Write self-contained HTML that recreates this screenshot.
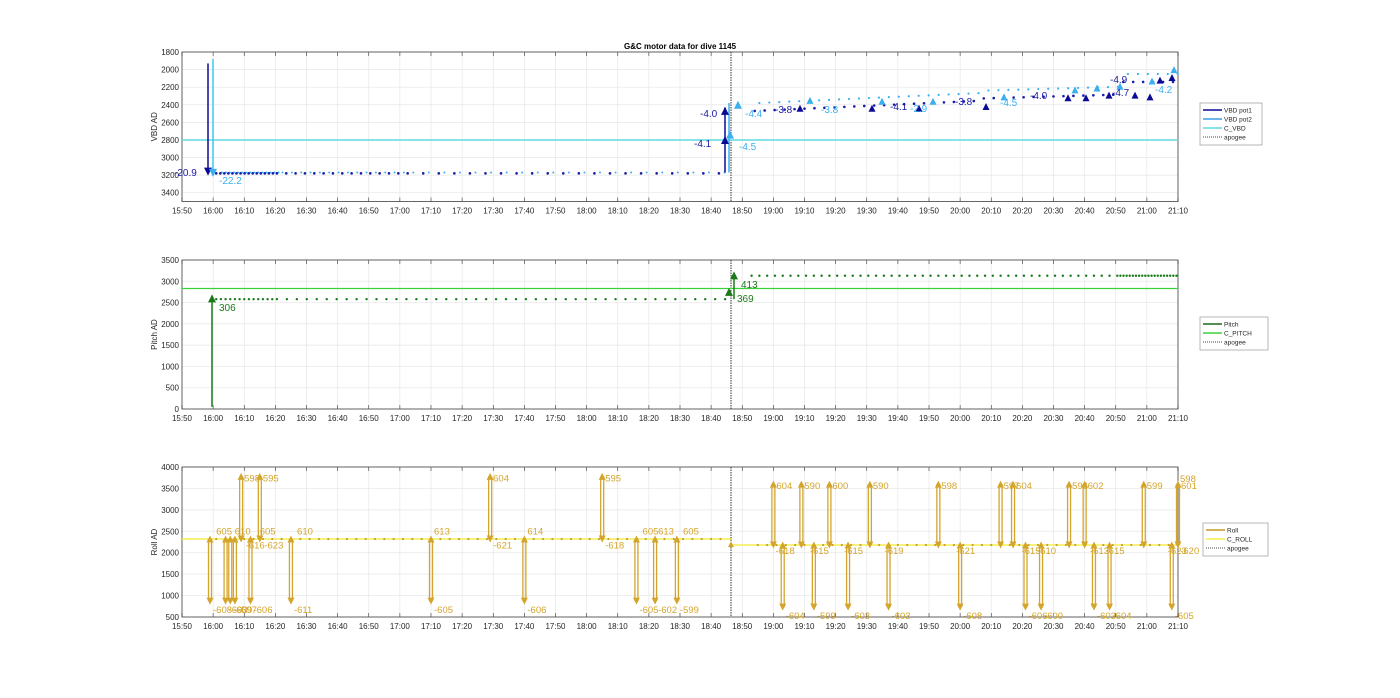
<!DOCTYPE html><html><head><style>body{margin:0;background:#fff}svg text{font-family:"Liberation Sans",sans-serif}</style></head><body>
<svg id="s" width="1400" height="693" xmlns="http://www.w3.org/2000/svg">
<text x="680" y="49" font-size="8" font-weight="bold" text-anchor="middle" fill="#000">G&amp;C motor data for dive 1145</text>
</svg>
<script>
const s=document.getElementById('s');let h='';
const X0=182,X1=1178,dx=(X1-X0)/32;
const tx=m=>X0+m*dx/10;
const T=['15:50','16:00','16:10','16:20','16:30','16:40','16:50','17:00','17:10','17:20','17:30','17:40','17:50','18:00','18:10','18:20','18:30','18:40','18:50','19:00','19:10','19:20','19:30','19:40','19:50','20:00','20:10','20:20','20:30','20:40','20:50','21:00','21:10'];
function axes(top,bot,vals,ymap,ylabel){
 for(let i=0;i<=32;i++){let x=X0+i*dx;h+=`<line x1="${x}" y1="${top}" x2="${x}" y2="${bot}" stroke="#e6e6e6" stroke-width="0.7"/>`;
 h+=`<line x1="${x}" y1="${bot}" x2="${x}" y2="${bot-4}" stroke="#333" stroke-width="0.6"/><line x1="${x}" y1="${top}" x2="${x}" y2="${top+4}" stroke="#333" stroke-width="0.6"/>`;
 h+=`<text x="${x}" y="${bot+12}" font-size="8" fill="#262626" text-anchor="middle">${T[i]}</text>`;}
 vals.forEach(v=>{let y=ymap(v);h+=`<line x1="${X0}" y1="${y}" x2="${X1}" y2="${y}" stroke="#e6e6e6" stroke-width="0.7"/><text x="${X0-3}" y="${y+3}" font-size="8" fill="#262626" text-anchor="end">${v}</text>`;});
 h+=`<rect x="${X0}" y="${top}" width="${X1-X0}" height="${bot-top}" fill="none" stroke="#262626" stroke-width="0.7"/>`;
 h+=`<text transform="translate(157,${(top+bot)/2}) rotate(-90)" font-size="8" fill="#262626" text-anchor="middle">${ylabel}</text>`;
 h+=`<line x1="731" y1="${top}" x2="731" y2="${bot}" stroke="#333" stroke-width="1" stroke-dasharray="1.5,1"/>`;
}
function dot(x,y,c,r=1.3){h+=`<circle cx="${x}" cy="${y}" r="${r}" fill="${c}"/>`;}
function tri(x,y,c,up,sz=4){h+=up?`<polygon points="${x-sz},${y+sz} ${x+sz},${y+sz} ${x},${y-sz}" fill="${c}"/>`:`<polygon points="${x-sz},${y-sz} ${x+sz},${y-sz} ${x},${y+sz}" fill="${c}"/>`;}
function txt(x,y,t,c,fs=10){h+=`<text x="${x}" y="${y}" font-size="${fs}" fill="${c}">${t}</text>`;}
function legend(x,y,w,items){h+=`<rect x="${x}" y="${y}" width="${w}" height="${items.length*9+6}" fill="#fff" stroke="#999" stroke-width="0.7"/>`;
 items.forEach((it,i)=>{let yy=y+7+i*9;h+=`<line x1="${x+3}" y1="${yy}" x2="${x+22}" y2="${yy}" stroke="${it[1]}" stroke-width="${it[2]?1:1.5}" ${it[2]?'stroke-dasharray="1,1"':''}/><text x="${x+24}" y="${yy+2.5}" font-size="6.5" fill="#262626">${it[0]}</text>`;});}
// Plot 1
const y1=v=>52+(v-1800)*149.5/1700;
axes(52,201.5,[1800,2000,2200,2400,2600,2800,3000,3200,3400],y1,'VBD AD');
h+=`<line x1="${X0}" y1="${y1(2800)}" x2="${X1}" y2="${y1(2800)}" stroke="#5fdce0" stroke-width="1.5"/>`;
for(let m=11;m<175;m+= (m<30?1.3:(m<70?3:5))){dot(tx(m),y1(3180),'#1a1aa8');dot(tx(m+1.8),y1(3170),'#3ab0f0',1);}
h+=`<line x1="208" y1="${y1(1930)}" x2="208" y2="${y1(3170)}" stroke="#0a0a96" stroke-width="1.5"/><line x1="213" y1="${y1(1880)}" x2="213" y2="${y1(3170)}" stroke="#3cc8f0" stroke-width="1.5"/>`;
tri(208,y1(3160),'#0a0a96',false);tri(213,y1(3175),'#3ab0f0',false);
txt(174,176,'-20.9','#1a1aa8');txt(219,184,'-22.2','#3ab0f0');
h+=`<line x1="725" y1="${y1(3170)}" x2="725" y2="${y1(2430)}" stroke="#0a0a96" stroke-width="1.5"/><line x1="729" y1="${y1(3170)}" x2="729" y2="${y1(2380)}" stroke="#3ab0f0" stroke-width="1.5"/>`;
tri(725,y1(2800),'#0a0a96',true);tri(725,y1(2470),'#0a0a96',true);tri(730,y1(2740),'#3ab0f0',true);tri(738,y1(2400),'#3ab0f0',true);
txt(700,117,'-4.0','#1a1aa8');txt(694,147,'-4.1','#1a1aa8');txt(739,150,'-4.5','#3ab0f0');txt(745,117,'-4.4','#3ab0f0');
for(let m=184;m<320;m+=3.2){let v=2470-(m-184)*1.6;if(m>255)v=2330-(m-255)*1.0;if(m>300)v=2140;dot(tx(m),y1(v),'#1a1aa8');dot(tx(m+1.5),y1(v-90),'#3ab0f0',1.1);}
[[800,2440,1],[810,2350,0],[872,2440,1],[882,2360,0],[919,2440,1],[933,2360,0],[986,2420,1],[1004,2310,0],[1068,2320,1],[1075,2230,0],[1086,2320,1],[1097,2210,0],[1109,2290,1],[1120,2190,0],[1135,2290,1],[1152,2130,0],[1160,2120,1],[1172,2090,1],[1174,2000,0],[1150,2310,1]].forEach(a=>tri(a[0],y1(a[1]),a[2]?'#0a0a96':'#3ab0f0',true,3.5));
[[775,113,'-3.8',1],[821,113,'-3.8',0],[890,110,'-4.1',1],[910,112,'-2.9',0],[955,105,'-3.8',1],[1000,106,'-4.5',0],[1030,99,'-4.0',1],[1110,83,'-4.9',1],[1112,96,'-4.7',1],[1155,93,'-4.2',0]].forEach(a=>txt(a[0],a[1],a[2],a[3]?'#1a1aa8':'#3ab0f0'));
legend(1200,103,62,[['VBD pot1','#0a0a96'],['VBD pot2','#3a9de8'],['C_VBD','#5fdce0'],['apogee','#444',1]]);
// Plot 2
const y2=v=>260+(3500-v)*149/3500;
axes(260,409,[0,500,1000,1500,2000,2500,3000,3500],y2,'Pitch AD');
h+=`<line x1="${X0}" y1="${y2(2830)}" x2="${X1}" y2="${y2(2830)}" stroke="#3ad23a" stroke-width="1.3"/>`;
for(let m=11;m<175;m+=(m<30?1.5:3.2))dot(tx(m),y2(2580),'#1a7a1a',1.2);
for(let m=183;m<320;m+=(m>300?1:2.5))dot(tx(m),y2(3130),'#1a7a1a',1.2);
h+=`<line x1="212" y1="${y2(50)}" x2="212" y2="${y2(2580)}" stroke="#1a7a1a" stroke-width="1.5"/>`;tri(212,y2(2600),'#1a7a1a',true);
h+=`<line x1="734" y1="${y2(2580)}" x2="734" y2="${y2(3100)}" stroke="#1a7a1a" stroke-width="1.5"/>`;tri(729,y2(2750),'#1a7a1a',true);tri(734,y2(3140),'#1a7a1a',true);
txt(219,311,'306','#1a7a1a');txt(741,288,'413','#1a7a1a');txt(737,302,'369','#1a7a1a');
legend(1200,317,68,[['Pitch','#1a6a1a'],['C_PITCH','#3ad23a'],['apogee','#444',1]]);
// Plot 3
const y3=v=>467+(4000-v)*150/3500;
axes(467,617,[500,1000,1500,2000,2500,3000,3500,4000],y3,'Roll AD');
h+=`<line x1="${X0}" y1="${y3(2320)}" x2="731" y2="${y3(2320)}" stroke="#f4ee50" stroke-width="1.5"/><line x1="731" y1="${y3(2180)}" x2="${X1}" y2="${y3(2180)}" stroke="#f4ee50" stroke-width="1.5"/>`;
for(let m=11;m<175;m+=3)dot(tx(m),y3(2320),'#c8a030',1.1);
for(let m=185;m<320;m+=3)dot(tx(m),y3(2180),'#c8a030',1.1);
const C='#d4a52c';
function arr(m,base,end,lab,lx,ly){let x=tx(m);h+=`<line x1="${x-1.5}" y1="${y3(base)}" x2="${x-1.5}" y2="${y3(end)}" stroke="${C}" stroke-width="1.3"/><line x1="${x+1.5}" y1="${y3(base)}" x2="${x+1.5}" y2="${y3(end)}" stroke="${C}" stroke-width="1.3"/>`;
 tri(x,y3(end),C,end>base,3.5);tri(x,y3(base),C,end<base,3.5);txt(x+(lx||3),ly||(end>base?y3(end)+5:y3(end)+12),lab,C,9.5);}
[[9,'-608'],[14,'-603'],[15.5,'-609'],[17,'-597'],[22,'-606'],[35,'-611'],[80,'-605'],[110,'-606'],[146,'-605'],[152,'-602'],[159,'-599']].forEach(a=>arr(a[0],2320,870,a[1]));
[[19,'598'],[25,'595'],[99,'604'],[135,'595']].forEach(a=>arr(a[0],2320,3780,a[1]));
[[19.5,'-616',0],[25.5,'-623',0],[99,'-621'],[135,'-618']].forEach(a=>txt(tx(a[0])+3,y3(2100),a[1],C,9.5));
[[10,'605'],[36,'610'],[80,'613'],[110,'614'],[147,'605'],[152,'613'],[160,'605'],[16,'610'],[24,'605']].forEach(a=>txt(tx(a[0])+3,y3(2430),a[1],C,9.5));
[[190,'604'],[199,'590'],[208,'600'],[221,'590'],[243,'598'],[263,'597'],[267,'604'],[285,'596'],[290,'602'],[309,'599'],[320,'601']].forEach(a=>arr(a[0],2180,3600,a[1]));
[[193,'-604'],[203,'-599'],[214,'-603'],[227,'-603'],[250,'-608'],[271,'-606'],[276,'-600'],[293,'-603'],[298,'-604'],[318,'-605']].forEach(a=>arr(a[0],2180,730,a[1]));
txt(1180,482,'598',C,9.5);
[[192,'-618'],[203,'-615'],[214,'-615'],[227,'-619'],[250,'-621'],[271,'-615'],[276,'-610'],[293,'-613'],[298,'-615'],[318,'-623'],[322,'-620']].forEach(a=>txt(tx(a[0])-4,y3(1970),a[1],C,9.5));
tri(731,y3(2200),C,true,3);
legend(1203,523,65,[['Roll','#c89a20'],['C_ROLL','#f4ee50'],['apogee','#444',1]]);
s.insertAdjacentHTML('beforeend',h);
</script>
</body></html>
